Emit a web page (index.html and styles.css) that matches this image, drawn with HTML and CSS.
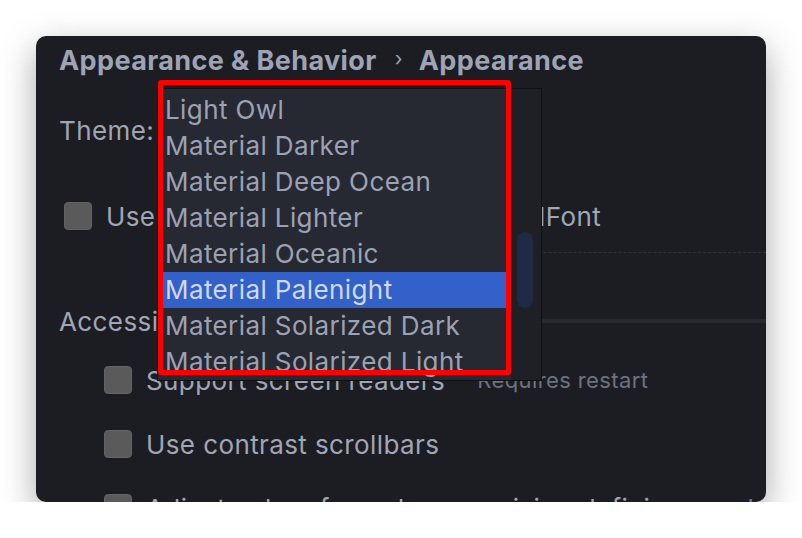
FILE: index.html
```html
<!DOCTYPE html>
<html>
<head>
<meta charset="utf-8">
<link rel="stylesheet" href="styles.css">
</head>
<body>
<div class="window">
  <div class="crumb"><span>Appearance &amp; Behavior</span><span class="sep">›</span><span>Appearance</span></div>
  <div class="row theme-row"><span>Theme:</span><span class="theme-combo">Material Palenight</span></div>
  <div class="row first-check"><span class="cb"></span><span class="label">Use custom font:</span><span class="font-combo">.AppleSystemUIFont</span></div>
  <div class="dashed"></div>
  <div class="group-title"><span>Accessibility</span><span class="group-line"></span></div>
  <div class="group">
    <div class="row"><span class="cb"></span><span>Support screen readers</span><span class="hint">Requires restart</span></div>
    <div class="row"><span class="cb"></span><span>Use contrast scrollbars</span></div>
    <div class="row"><span class="cb"></span><span>Adjust colors for red-green vision deficiency</span><span class="link">How it works</span></div>
  </div>

  <div class="popup">
    <ul class="list">
      <li>Light Owl</li>
      <li>Material Darker</li>
      <li>Material Deep Ocean</li>
      <li>Material Lighter</li>
      <li>Material Oceanic</li>
      <li class="selected">Material Palenight</li>
      <li>Material Solarized Dark</li>
      <li>Material Solarized Light</li>
    </ul>
    <div class="scrollbar"><div class="thumb"></div></div>
  </div>
  <div class="annot"></div>
</div>
</body>
</html>
```

FILE: styles.css
```css
html, body {
  margin: 0;
  padding: 0;
  background: #ffffff;
}
body {
  font-family: Inter, "Noto Sans", sans-serif;
  color: #a0a6b6;
}
.window {
  position: relative;
  margin: 36px 0 0 36px;
  width: 730px;
  height: 466px;
  background: #1b1d22;
  border-radius: 10px;
  box-shadow: 0 12px 34px rgba(0, 0, 0, 0.35);
  overflow: hidden;
  padding: 10px 0 0 23px;
  box-sizing: border-box;
}
.crumb {
  display: flex;
  align-items: center;
  font-size: 27px;
  font-weight: 700;
  letter-spacing: 0.4px;
  line-height: 30px;
  color: #9ea4b6;
  white-space: nowrap;
}
.crumb .sep {
  font-weight: 400;
  font-size: 20px;
  margin: 0 16px 0 18px;
  position: relative;
  top: -2px;
}
.row {
  display: flex;
  align-items: center;
  height: 36px;
  font-size: 26px;
  letter-spacing: 0.4px;
  white-space: nowrap;
}
.theme-row {
  margin-top: 36px;
}
.theme-combo {
  margin-left: 20px;
}
.first-check {
  margin-top: 50px;
  margin-left: 5px;
}
.cb {
  width: 28px;
  height: 28px;
  border-radius: 4px;
  background: #5a5a5b;
  box-sizing: border-box;
  border: 1px solid #626263;
  margin-right: 14px;
  flex: none;
}
.label {
  width: 238px;
  flex: none;
}
.font-combo {
  flex: none;
}
.dashed {
  margin: 18px 0 0 360px;
  border-top: 1px dashed #2e3138;
}
.group-title {
  display: flex;
  align-items: center;
  height: 36px;
  margin-top: 50px;
  font-size: 26px;
  letter-spacing: 0.4px;
}
.group-line {
  flex: 1;
  height: 4px;
  background: #26292f;
  margin-left: 16px;
}
.group {
  margin-left: 45px;
  margin-top: 23px;
  display: flex;
  flex-direction: column;
  gap: 28px;
}
.hint {
  margin-left: 32px;
  font-size: 22px;
  color: #6d7282;
}
.link {
  margin-left: 36px;
  color: #3f7cf0;
}
.popup {
  position: absolute;
  left: 121px;
  top: 52px;
  width: 385px;
  height: 293px;
  box-sizing: border-box;
  border: 1px solid #101114;
  background: #1f2127;
  display: flex;
}
.list {
  list-style: none;
  margin: 0;
  padding: 3px 0 0 0;
  width: 353px;
  background: #262932;
  overflow: hidden;
}
.list li {
  height: 36px;
  line-height: 36px;
  padding-left: 7px;
  font-size: 26px;
  letter-spacing: 0.4px;
  color: #9ca2b4;
  white-space: nowrap;
}
.list li.selected {
  background: #3161c9;
  color: #d2d8e8;
}
.scrollbar {
  flex: 1;
  position: relative;
  background: #1e2026;
}
.thumb {
  position: absolute;
  left: 6px;
  top: 143px;
  width: 16px;
  height: 76px;
  border-radius: 8px;
  background: #1f2b46;
}
.annot {
  position: absolute;
  left: 122px;
  top: 44px;
  width: 353px;
  height: 295px;
  box-sizing: border-box;
  border: 5px solid #ff0000;
  border-radius: 3px;
}
```
